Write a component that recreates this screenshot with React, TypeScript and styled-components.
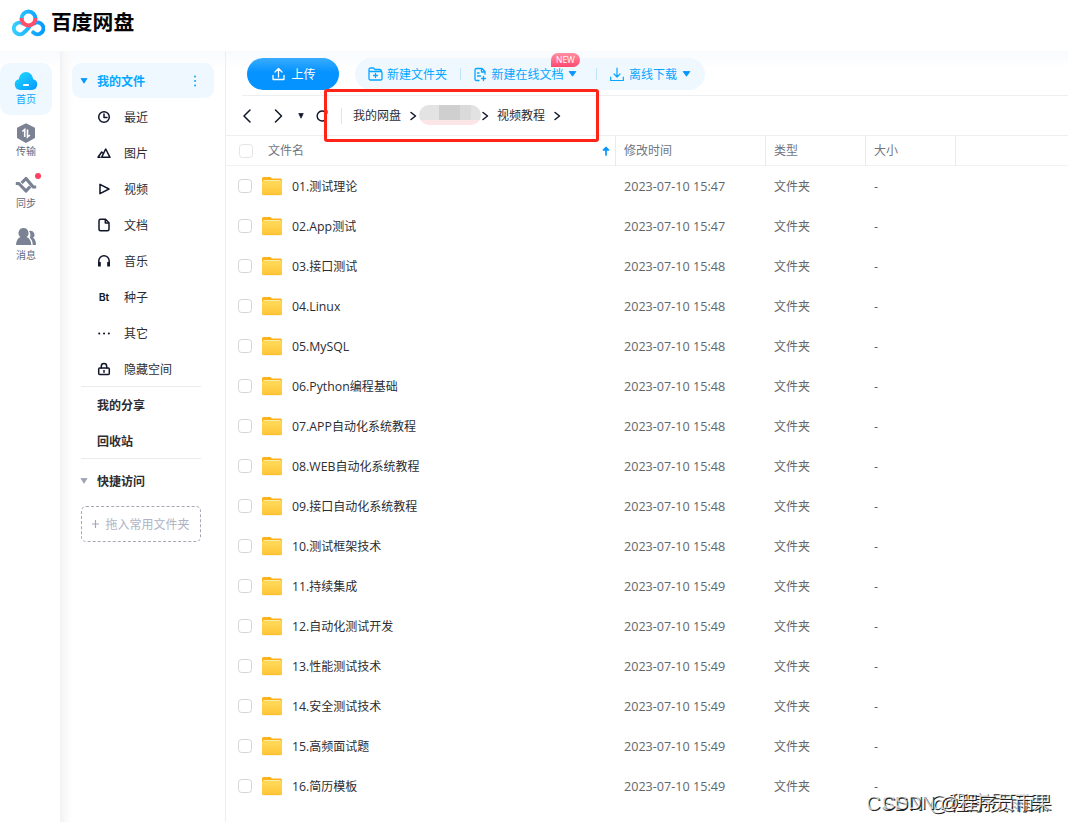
import React from 'react';
import styled, { createGlobalStyle, css } from 'styled-components';

const GlobalStyle = createGlobalStyle`
  * { box-sizing: border-box; }
  body {
    margin: 0;
    background: #fff;
    overflow: hidden;
    font-family: "Open Sans", "Noto Sans CJK SC", sans-serif;
    font-size: 12px;
    color: #2b2d33;
  }
  svg { display: block; flex: none; }
`;

const Page = styled.div`
  position: relative;
  display: flex;
  flex-direction: column;
  width: 1068px;
  height: 822px;
  overflow: hidden;
`;
const Header = styled.header`
  display: flex;
  align-items: center;
  gap: 6px;
  height: 51px;
  padding: 0 0 5px 11px;
  flex: none;
`;
const Brand = styled.span`
  font-size: 20.8px;
  line-height: 30px;
  font-weight: 700;
  color: #050505;
  padding-bottom: 2px;
`;
const Body = styled.div`
  display: flex;
  flex: 1;
  min-height: 0;
  background: linear-gradient(#f8fafd, #fff 18px);
`;
const Rail = styled.nav`
  display: flex;
  flex-direction: column;
  width: 60px;
  padding-top: 12px;
`;
const RailItem = styled.div<{ $active?: boolean }>`
  position: relative;
  display: flex;
  flex-direction: column;
  align-items: center;
  width: 52px;
  height: 52px;
  padding-top: 8px;
  border-radius: 10px;
  background: ${p => (p.$active ? '#f0f8ff' : 'transparent')};
  color: ${p => (p.$active ? '#06a7ff' : '#5f6880')};
  font-size: 10px;
  line-height: 14px;
`;
const Dot = styled.i`
  position: absolute;
  top: 6px;
  left: 35px;
  width: 6px;
  height: 6px;
  border-radius: 50%;
  background: #ff3f63;
`;
const Sidebar = styled.aside`
  width: 165px;
  padding: 12px 11px 0 12px;
  background: linear-gradient(90deg, #f2f2f2, #fafafa 6px, rgba(255, 255, 255, 0) 13px);
`;
const MyFiles = styled.div`
  display: flex;
  align-items: center;
  height: 35px;
  margin-bottom: 1px;
  padding: 0 17px 0 8px;
  border-radius: 9px;
  background: #f0f8ff;
  color: #06a7ff;
  font-weight: 700;
  span { flex: 1; padding: 1px 0 0 9px; }
`;
const SideItem = styled.div`
  display: flex;
  align-items: center;
  gap: 13px;
  height: 36px;
  padding-left: 25px;
`;
const SideHeading = styled.div<{ $toggle?: boolean }>`
  display: flex;
  align-items: center;
  gap: ${p => (p.$toggle ? 9 : 0)}px;
  height: 36px;
  padding-left: ${p => (p.$toggle ? 8 : 25)}px;
  font-weight: 700;
`;
const Rule = styled.div<{ $gap?: number }>`
  height: 1px;
  margin: -1px 13px ${p => p.$gap || 0}px 9px;
  background: #e9ebee;
`;
const DropZone = styled.div`
  display: flex;
  align-items: center;
  justify-content: center;
  gap: 6px;
  width: 120px;
  height: 36px;
  margin: 7px 0 0 9px;
  border: 1px dashed #a4a9ba;
  border-radius: 5px;
  color: #afb3c4;
`;
const Main = styled.main`
  display: flex;
  flex-direction: column;
  flex: 1;
  border-left: 1px solid #edeef0;
`;
const Toolbar = styled.div`
  display: flex;
  height: 45px;
  margin-left: 16px;
  padding: 7px 0 0 5px;
  border-bottom: 1px solid #edeef0;
  gap: 16px;
`;
const Upload = styled.button`
  display: flex;
  align-items: center;
  justify-content: center;
  gap: 6px;
  width: 92px;
  height: 32px;
  border: 0;
  padding: 0 0 0 2px;
  border-radius: 16px;
  background: linear-gradient(#38acff, #0593ff 45%, #0593ff);
  color: #fff;
  font: inherit;
`;
const Actions = styled.div`
  display: flex;
  align-items: center;
  width: 350px;
  height: 32px;
  padding-left: 13px;
  border-radius: 16px;
  background: #f0f8ff;
  color: #06a7ff;
`;
const Action = styled.div<{ $w: number; $gap: number }>`
  position: relative;
  display: flex;
  align-items: center;
  gap: ${p => p.$gap}px;
  width: ${p => p.$w}px;
  height: 32px;
  white-space: nowrap;
`;
const Split = styled.i<{ $right: number }>`
  width: 1px;
  height: 12px;
  margin-right: ${p => p.$right}px;
  background: #bfe5fa;
`;
const NewBadge = styled.b`
  position: absolute;
  top: -5px;
  left: 77px;
  width: 29px;
  height: 14px;
  border-radius: 7px 7px 7px 0;
  background: linear-gradient(#ff8ea0, #ff4970);
  color: #fff;
  font: 400 8.5px/14px "Open Sans", sans-serif;
  text-align: center;
`;
const NavBar = styled.div`
  display: flex;
  align-items: center;
  height: 40px;
  border-bottom: 1px solid #edeef0;
  padding-left: 16px;
`;
const NavIcons = styled.div`
  display: flex;
  align-items: center;
  width: 99px;
  padding-top: 1px;
`;
const Crumbs = styled.div`
  display: flex;
  align-items: center;
  height: 16px;
  border-left: 1px solid #e2e4e8;
  padding-left: 11px;
`;
const Redacted = styled.span`
  width: 62px;
  height: 20px;
  margin: 0 0 1px 2px;
  border-radius: 10px;
  background:
    linear-gradient(transparent 15px, #fbe5e7 15px),
    linear-gradient(90deg, #e4e3e4 20px, #cfcfd0 20px 41px, #dadadb 41px 52px, #e2e2e2 52px);
`;
const Highlight = styled.div`
  position: absolute;
  left: 324px;
  top: 88.5px;
  width: 275px;
  height: 53px;
  border: 3px solid #ff2318;
  border-radius: 3px;
`;
const cells = css`
  display: grid;
  grid-template-columns: 389px 150px 100px 90px 1fr;
  align-items: center;
`;
const Head = styled.div`
  ${cells}
  height: 30px;
  border-bottom: 1px solid #f1f2f4;
  color: #70757f;
`;
const HeadCell = styled.div`
  display: flex;
  align-items: center;
  height: 30px;
  padding: 0 0 2px 8px;
  border-left: 1px solid #e9eaed;
`;
const NameHead = styled.div`
  display: flex;
  align-items: center;
  padding: 0 5px 0 13px;
  gap: 15px;
  span { flex: 1; padding-bottom: 2px; }
`;
const Row = styled.div`
  ${cells}
  height: 40px;
  color: #62666c;
  > * { padding-left: 9px; }
`;
const NameCell = styled.div`
  && { padding-left: 12px; }
  display: flex;
  align-items: center;
  color: #2b2d33;
`;
const Box = styled.i<{ $light?: boolean }>`
  width: 14px;
  height: 14px;
  border: 1px solid ${p => (p.$light ? '#e3e4e7' : '#d3d5d9')};
  border-radius: 3.5px;
  background: #fff;
`;
const FolderSlot = styled.span`
  margin-left: 10px;
`;
const FileName = styled.span`
  margin-left: 10px;
  white-space: nowrap;
`;
const Latin = styled.span`
  font-size: 12.3px;
`;
const Stamp = styled.span`
  font-size: 12.6px;
`;
const Watermark = styled.div<{ $x: number; $size: number }>`
  position: absolute;
  left: ${p => p.$x}px;
  top: 790px;
  font: 400 ${p => p.$size}px/26px "Liberation Sans", "Noto Sans CJK SC", sans-serif;
  color: rgba(255, 255, 255, 0.75);
  text-shadow: 1px 1px 0 #222;
  white-space: nowrap;
`;

const Logo = () => (
  <svg width="34" height="28" viewBox="0 0 34 28" fill="none" strokeWidth="4" strokeLinecap="round">
    <defs>
      <linearGradient id="lg" x1="0" x2="34" y1="0" y2="0" gradientUnits="userSpaceOnUse">
        <stop stopColor="#3bd2ff" /><stop offset="1" stopColor="#0098ff" />
      </linearGradient>
    </defs>
    <path d="M10.600 9.500a6.900 6.900 0 0 1 13.800 0" stroke="url(#lg)" />
    <path d="M23 14.500a5.900 5.900 0 1 1-.8 8.900" stroke="url(#lg)" />
    <path d="M12 14.500a5.900 5.900 0 1 0 .9 9.100q2-1.700 5-5.100" stroke="url(#lg)" />
    <path d="M10.600 9v.5a6.900 6.900 0 0 0 13.800 0v-.5" stroke="#ff4f6b" strokeLinecap="butt" />
  </svg>
);

const CloudIcon = () => (
  <svg width="24" height="21" viewBox="0 0 24 21">
    <defs>
      <linearGradient id="cg" x1="0" y1="0" x2="1" y2="1">
        <stop stopColor="#20dcff" /><stop offset="1" stopColor="#0797ff" />
      </linearGradient>
    </defs>
    <path d="M6.500 19A5.500 5.500 0 0 1 4.800 8.200C5.500 4 8.300 1 12 1s6.500 3 7.200 7.200A5.500 5.500 0 0 1 17.500 19Z" fill="url(#cg)" />
    <rect x="9.200" y="13" width="5.700" height="2" rx=".5" fill="#fff" />
  </svg>
);
const TransferIcon = () => (
  <svg width="20" height="21" viewBox="0 0 20 21">
    <path d="M10 1.500 18 5.500v9L10 19l-8-4.500v-9Z" fill="#7b8294" stroke="#7b8294" strokeWidth="2" strokeLinejoin="round" />
    <path d="M6.300 8.500 8.700 6.500V14M11.500 6.500V14l2.400-2" fill="none" stroke="#fff" strokeWidth="1.600" />
  </svg>
);
const SyncIcon = () => (
  <svg width="22" height="21" viewBox="0 0 22 21" fill="none" stroke="#7b8294" strokeWidth="3.200" strokeLinejoin="round">
    <path d="M.8 8.500h3L11 16l4.200-4.500" />
    <path d="M6.600 8 11 3.500l7.200 8.500h3" />
  </svg>
);
const PeopleIcon = () => (
  <svg width="22" height="21" viewBox="0 0 22 21" fill="#7b8294">
    <path d="M8.500 1a5 5 0 0 1 3 9c3 1 4.700 4 4.800 8H1c.1-4 1.700-7 4.500-8a5 5 0 0 1 3-9Z" />
    <path d="M14 4a4 4 0 0 1 4 6.800c2 1 3 4 3 7.200h-3.300c0-3-1-5.500-2.900-7.200 1-2 .8-4.800-.8-6.800Z" />
  </svg>
);
const Caret = ({ color, size = 8 }: { color: string; size?: number }) => (
  <svg width={size} height="8" viewBox="0 0 8 8" preserveAspectRatio="none">
    <path d="M1 1.500h6L4 6.200Z" fill={color} stroke={color} strokeWidth=".8" strokeLinejoin="round" />
  </svg>
);

const glyphs: Record<string, React.ReactNode> = {
  最近: <><circle cx="7" cy="7" r="5.300" /><path d="M7 4v3.500h3" /></>,
  图片: <path d="M4.600 11.300 8.700 3l4.300 8.300ZM3 11.300H1L4.700 6l1.200 1" />,
  视频: <path d="M3 2.300v9.400L12 7Z" />,
  文档: <><path d="M3.500 1.300h5l3.500 3.500v6.400q0 1.500-1.500 1.500h-7Q2 12.700 2 11.200V2.800q0-1.500 1.500-1.500Z" /><path d="M8.300 2v3h3" /></>,
  音乐: <><path d="M1.800 9V7a5.200 5.200 0 0 1 10.400 0v2" /><path d="M2.400 8v4.500M11.600 8v4.500" strokeWidth="2.800" strokeLinecap="butt" /></>,
  种子: <text x="7" y="10.500" textAnchor="middle" fontFamily="Inter, sans-serif" fontSize="10.500" fontWeight="600" fill="#101629" stroke="none">Bt</text>,
  其它: <path d="M2.200 7.500h.1M7 7.500h.1M11.800 7.500h.1" strokeWidth="2" />,
  隐藏空间: <><rect x="1.700" y="6" width="10.600" height="6.500" rx="1" /><path d="M4.300 6V4.300a2.700 2.700 0 0 1 5.400 0V6M7 8.500v1.800" /></>,
};

const FolderIcon = () => (
  <svg width="20" height="20" viewBox="0 0 20 20">
    <defs>
      <linearGradient id="fg" x1="0" y1="0" x2="0" y2="1">
        <stop stopColor="#ffdb5c" /><stop offset="1" stopColor="#ffc536" />
      </linearGradient>
    </defs>
    <path d="M0 2.600Q0 1 1.500 1h6.800l1.500 1.500h8.700Q20 2.500 20 4v6H0Z" fill="#ffb31a" />
    <path d="M1.500 4h17v4h-17Z" fill="#fff0bd" />
    <path d="M0 6.500q0-1.700 1.500-1.700h17q1.500 0 1.500 1.700v11.300q0 1.200-1.500 1.200h-17Q0 19 0 17.800Z" fill="url(#fg)" />
    <path d="M.8 18.700h18.400" stroke="#ffb928" strokeWidth=".7" />
  </svg>
);

const files: [string, string][] = [
  ['01.测试理论', '47'], ['02.App测试', '47'], ['03.接口测试', '48'], ['04.Linux', '48'],
  ['05.MySQL', '48'], ['06.Python编程基础', '48'], ['07.APP自动化系统教程', '48'],
  ['08.WEB自动化系统教程', '48'], ['09.接口自动化系统教程', '48'], ['10.测试框架技术', '48'],
  ['11.持续集成', '49'], ['12.自动化测试开发', '49'], ['13.性能测试技术', '49'],
  ['14.安全测试技术', '49'], ['15.高频面试题', '49'], ['16.简历模板', '49'],
];

const FileRow = ({ name, minute }: { name: string; minute: string }) => {
  const prefix = (name.match(/^[\w.]+/) || [''])[0];
  return (
    <Row>
      <NameCell>
        <Box />
        <FolderSlot><FolderIcon /></FolderSlot>
        <FileName><Latin>{prefix}</Latin>{name.slice(prefix.length)}</FileName>
      </NameCell>
      <Stamp>2023-07-10 15:{minute}</Stamp>
      <span>文件夹</span>
      <Stamp>-</Stamp>
    </Row>
  );
};

const Stroke = ({ w, h, d, sw = 1.3, color = '#06a7ff' }: { w: number; h: number; d: string; sw?: number; color?: string }) => (
  <svg width={w} height={h} viewBox={`0 0 ${w} ${h}`} fill="none" stroke={color} strokeWidth={sw} strokeLinecap="round" strokeLinejoin="round">
    <path d={d} />
  </svg>
);
const CrumbArrow = () => <Stroke w={8} h={10} d="M2 1.500 6.500 5 2 8.500" sw={1.5} color="#101629" />;
const Crumb = styled.span<{ $left?: number }>`
  margin: 0 8px 1px ${p => p.$left || 0}px;
`;
const Gap = styled.i<{ $w: number }>`
  width: ${p => p.$w}px;
`;

export default function App() {
  return (
    <Page>
      <GlobalStyle />
      <Header><Logo /><Brand>百度网盘</Brand></Header>
      <Body>
        <Rail>
          <RailItem $active><CloudIcon />首页</RailItem>
          <RailItem><TransferIcon />传输</RailItem>
          <RailItem><SyncIcon />同步<Dot /></RailItem>
          <RailItem><PeopleIcon />消息</RailItem>
        </Rail>
        <Sidebar>
          <MyFiles>
            <Caret color="#0696ff" /><span>我的文件</span>
            <Stroke w={4} h={14} d="M2 2.500h.1M2 7h.1M2 11.500h.1" sw={1.8} />
          </MyFiles>
          {Object.entries(glyphs).map(([label, glyph]) => (
            <SideItem key={label}>
              <svg width="14" height="14" viewBox="0 0 14 14" fill="none" stroke="#101629" strokeWidth="1.500" strokeLinejoin="round" strokeLinecap="round">{glyph}</svg>
              {label}
            </SideItem>
          ))}
          <Rule />
          <SideHeading>我的分享</SideHeading>
          <SideHeading>回收站</SideHeading>
          <Rule $gap={4} />
          <SideHeading $toggle><Caret color="#9da3b8" />快捷访问</SideHeading>
          <DropZone>
            <Stroke w={7} h={8} d="M3.500.5v7M0 4h7" sw={1.2} color="#a4a9ba" />拖入常用文件夹
          </DropZone>
        </Sidebar>
        <Main>
          <Toolbar>
            <Upload>
              <Stroke w={13} h={14} d="M6.500 10V1.500M3 5l3.500-3.500L10 5M1 8.500v4h11v-4" color="#fff" />上传
            </Upload>
            <Actions>
              <Action $w={92} $gap={4}>
                <Stroke w={15} h={14} d="M1 11.500v-9Q1 1 2.500 1h3l1.500 1.500h4.500Q13 2.500 13.500 4M1.200 4.500h11.500q1.300 0 1.300 1.200v6q0 1.300-1.500 1.300h-10Q1 13 1 11.500M7.500 6.500v4M5.500 8.500h4" />新建文件夹
              </Action>
              <Split $right={13} />
              <Action $w={122} $gap={4.5}>
                <Stroke w={13} h={15} d="M5 13.500H2.500Q1 13.500 1 12V3q0-1.500 1.500-1.500h5.500l3 3v2.500M7.500 1.500V5H11M3.500 6h1.500M3.500 9h3M9.500 9.500v4M7.500 11.500h4" />
                新建在线文档<Caret color="#0696ff" size={9} /><NewBadge>NEW</NewBadge>
              </Action>
              <Split $right={13} />
              <Action $w={90} $gap={5}>
                <Stroke w={14} h={15} d="M7 1v9M4 7l3 3 3-3M.7 10v3.500h12.600V10" sw={1.2} />离线下载<Caret color="#0696ff" size={9} />
              </Action>
            </Actions>
          </Toolbar>
          <NavBar>
            <NavIcons>
              <Stroke w={9} h={14} d="M8 1 2 7l6 6" sw={1.5} color="#101629" /><Gap $w={23} />
              <Stroke w={9} h={14} d="M1.500 1l6 6-6 6" sw={1.5} color="#101629" /><Gap $w={15} />
              <Caret color="#101629" size={6} /><Gap $w={11} />
              <Stroke w={13} h={12} d="M10.500 2.300A5 5 0 1 0 11 9.200M11.800.8v2.500H9.500" sw={1.4} color="#101629" />
            </NavIcons>
            <Crumbs>
              <Crumb>我的网盘</Crumb><CrumbArrow /><Redacted /><CrumbArrow />
              <Crumb $left={8}>视频教程</Crumb><CrumbArrow />
            </Crumbs>
          </NavBar>
          <Head>
            <NameHead>
              <Box $light /><span>文件名</span>
              <Stroke w={8} h={10} d="M4 9V2M1.500 4 4 1.500 6.500 4Z" sw={1.7} color="#0696ff" />
            </NameHead>
            <HeadCell>修改时间</HeadCell>
            <HeadCell>类型</HeadCell>
            <HeadCell>大小</HeadCell>
            <HeadCell />
          </Head>
          {files.map(([name, minute]) => <FileRow key={name} name={name} minute={minute} />)}
        </Main>
      </Body>
      <Highlight />
      <Watermark $x={866} $size={20}>CSDN @程序员雨果</Watermark>
      <Watermark $x={882} $size={18.6}>CSDN @程序员雨果</Watermark>
    </Page>
  );
}
